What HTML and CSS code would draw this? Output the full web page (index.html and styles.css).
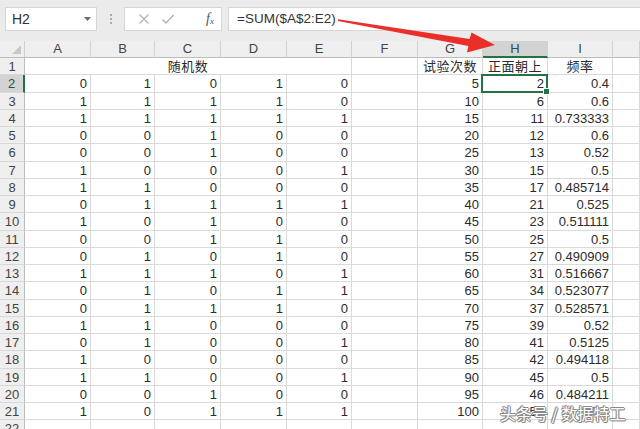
FILE: index.html
```html
<!DOCTYPE html>
<html lang="zh-CN">
<head>
<meta charset="utf-8">
<title>随机数</title>
<link rel="stylesheet" href="styles.css">
</head>
<body>
<div class="app">
  <div class="fbar">
    <div class="namebox"><span class="nb-text">H2</span><svg class="nb-arrow" width="7" height="4" viewBox="0 0 7 4"><path d="M0 0H7L3.5 4Z" fill="#6a6a6a"/></svg></div>
    <div class="grip"><i></i><i></i><i></i></div>
    <div class="fbtns">
      <svg class="ic" width="12" height="12" viewBox="0 0 12 12"><path d="M1.5 1.5L10.5 10.5M10.5 1.5L1.5 10.5" stroke="#b4b4b4" stroke-width="1.3" fill="none"/></svg>
      <svg class="ic" width="14" height="12" viewBox="0 0 14 12"><path d="M1.5 6.5L5 10L12.5 2" stroke="#b4b4b4" stroke-width="1.5" fill="none"/></svg>
      <span class="fx">f<sub>x</sub></span>
    </div>
    <div class="formula">=SUM($A$2:E2)</div>
  </div>

  <div class="sheet">
    <div class="corner"><svg width="9" height="9" viewBox="0 0 9 9"><path d="M9 0V9H0Z" fill="#c8c8c8"/></svg></div>
    <div class="ch">A</div><div class="ch">B</div><div class="ch">C</div><div class="ch">D</div><div class="ch">E</div><div class="ch">F</div><div class="ch">G</div><div class="ch ch-sel">H</div><div class="ch">I</div><div class="ch"></div>

    <div class="rh">1</div><div class="c merged">随机数</div><div class="c"></div><div class="c t">试验次数</div><div class="c t">正面朝上</div><div class="c t">频率</div><div class="c"></div>

    <div class="rh rh-sel">2</div><div class="c n">0</div><div class="c n">1</div><div class="c n">0</div><div class="c n">1</div><div class="c n">0</div><div class="c"></div><div class="c n">5</div><div class="c n active">2</div><div class="c n">0.4</div><div class="c"></div>
    <div class="rh">3</div><div class="c n">1</div><div class="c n">1</div><div class="c n">1</div><div class="c n">1</div><div class="c n">0</div><div class="c"></div><div class="c n">10</div><div class="c n">6</div><div class="c n">0.6</div><div class="c"></div>
    <div class="rh">4</div><div class="c n">1</div><div class="c n">1</div><div class="c n">1</div><div class="c n">1</div><div class="c n">1</div><div class="c"></div><div class="c n">15</div><div class="c n">11</div><div class="c n">0.733333</div><div class="c"></div>
    <div class="rh">5</div><div class="c n">0</div><div class="c n">0</div><div class="c n">1</div><div class="c n">0</div><div class="c n">0</div><div class="c"></div><div class="c n">20</div><div class="c n">12</div><div class="c n">0.6</div><div class="c"></div>
    <div class="rh">6</div><div class="c n">0</div><div class="c n">0</div><div class="c n">1</div><div class="c n">0</div><div class="c n">0</div><div class="c"></div><div class="c n">25</div><div class="c n">13</div><div class="c n">0.52</div><div class="c"></div>
    <div class="rh">7</div><div class="c n">1</div><div class="c n">0</div><div class="c n">0</div><div class="c n">0</div><div class="c n">1</div><div class="c"></div><div class="c n">30</div><div class="c n">15</div><div class="c n">0.5</div><div class="c"></div>
    <div class="rh">8</div><div class="c n">1</div><div class="c n">1</div><div class="c n">0</div><div class="c n">0</div><div class="c n">0</div><div class="c"></div><div class="c n">35</div><div class="c n">17</div><div class="c n">0.485714</div><div class="c"></div>
    <div class="rh">9</div><div class="c n">0</div><div class="c n">1</div><div class="c n">1</div><div class="c n">1</div><div class="c n">1</div><div class="c"></div><div class="c n">40</div><div class="c n">21</div><div class="c n">0.525</div><div class="c"></div>
    <div class="rh">10</div><div class="c n">1</div><div class="c n">0</div><div class="c n">1</div><div class="c n">0</div><div class="c n">0</div><div class="c"></div><div class="c n">45</div><div class="c n">23</div><div class="c n">0.511111</div><div class="c"></div>
    <div class="rh">11</div><div class="c n">0</div><div class="c n">0</div><div class="c n">1</div><div class="c n">1</div><div class="c n">0</div><div class="c"></div><div class="c n">50</div><div class="c n">25</div><div class="c n">0.5</div><div class="c"></div>
    <div class="rh">12</div><div class="c n">0</div><div class="c n">1</div><div class="c n">0</div><div class="c n">1</div><div class="c n">0</div><div class="c"></div><div class="c n">55</div><div class="c n">27</div><div class="c n">0.490909</div><div class="c"></div>
    <div class="rh">13</div><div class="c n">1</div><div class="c n">1</div><div class="c n">1</div><div class="c n">0</div><div class="c n">1</div><div class="c"></div><div class="c n">60</div><div class="c n">31</div><div class="c n">0.516667</div><div class="c"></div>
    <div class="rh">14</div><div class="c n">0</div><div class="c n">1</div><div class="c n">0</div><div class="c n">1</div><div class="c n">1</div><div class="c"></div><div class="c n">65</div><div class="c n">34</div><div class="c n">0.523077</div><div class="c"></div>
    <div class="rh">15</div><div class="c n">0</div><div class="c n">1</div><div class="c n">1</div><div class="c n">1</div><div class="c n">0</div><div class="c"></div><div class="c n">70</div><div class="c n">37</div><div class="c n">0.528571</div><div class="c"></div>
    <div class="rh">16</div><div class="c n">1</div><div class="c n">1</div><div class="c n">0</div><div class="c n">0</div><div class="c n">0</div><div class="c"></div><div class="c n">75</div><div class="c n">39</div><div class="c n">0.52</div><div class="c"></div>
    <div class="rh">17</div><div class="c n">0</div><div class="c n">1</div><div class="c n">0</div><div class="c n">0</div><div class="c n">1</div><div class="c"></div><div class="c n">80</div><div class="c n">41</div><div class="c n">0.5125</div><div class="c"></div>
    <div class="rh">18</div><div class="c n">1</div><div class="c n">0</div><div class="c n">0</div><div class="c n">0</div><div class="c n">0</div><div class="c"></div><div class="c n">85</div><div class="c n">42</div><div class="c n">0.494118</div><div class="c"></div>
    <div class="rh">19</div><div class="c n">1</div><div class="c n">1</div><div class="c n">0</div><div class="c n">0</div><div class="c n">1</div><div class="c"></div><div class="c n">90</div><div class="c n">45</div><div class="c n">0.5</div><div class="c"></div>
    <div class="rh">20</div><div class="c n">0</div><div class="c n">0</div><div class="c n">1</div><div class="c n">0</div><div class="c n">0</div><div class="c"></div><div class="c n">95</div><div class="c n">46</div><div class="c n">0.484211</div><div class="c"></div>
    <div class="rh">21</div><div class="c n">1</div><div class="c n">0</div><div class="c n">1</div><div class="c n">1</div><div class="c n">1</div><div class="c"></div><div class="c n">100</div><div class="c n">50</div><div class="c n">0.5</div><div class="c"></div>
    <div class="rh">22</div><div class="c"></div><div class="c"></div><div class="c"></div><div class="c"></div><div class="c"></div><div class="c"></div><div class="c"></div><div class="c"></div><div class="c"></div><div class="c"></div>
  </div>

  <svg class="arrow" width="640" height="429" viewBox="0 0 640 429">
    <path d="M338.1 19.2 L469.6 39 L471.5 32.5 L495 45 L467 52.5 L468.4 46 L337.9 20.9 Z" fill="#ea2f2b"/>
  </svg>

  <div class="watermark">头条号 / 数据特工</div>
</div>
</body>
</html>
```

FILE: styles.css
```css
html, body {
  margin: 0;
  padding: 0;
  background: #ffffff;
}

body {
  width: 640px;
  height: 429px;
  overflow: hidden;
  font-family: "Liberation Sans", "Noto Sans CJK SC", sans-serif;
  color: #2b2b2b;
}

.app {
  position: relative;
  width: 640px;
  height: 429px;
  overflow: hidden;
}

/* formula bar */
.fbar {
  height: 41px;
  box-sizing: border-box;
  background: #ebebeb;
  display: flex;
  align-items: flex-start;
  padding: 7px 0 0 5px;
}

.namebox {
  width: 92px;
  height: 24px;
  box-sizing: border-box;
  background: #fff;
  border: 1px solid #d6d6d6;
  display: flex;
  align-items: center;
  justify-content: space-between;
  padding: 0 5px 0 6px;
}

.nb-text {
  font-size: 14px;
  color: #333;
}

.grip {
  width: 27px;
  height: 24px;
  display: flex;
  flex-direction: column;
  align-items: center;
  justify-content: center;
  gap: 2px;
}

.grip i {
  display: block;
  width: 2px;
  height: 2px;
  background: #a8a8a8;
}

.fbtns {
  width: 98px;
  height: 24px;
  box-sizing: border-box;
  background: #fff;
  border: 1px solid #d6d6d6;
  display: flex;
  align-items: center;
  padding: 0 7px 0 13px;
}

.fbtns .ic:first-child {
  margin-right: 11px;
}

.fx {
  margin-left: auto;
  font-family: "Liberation Serif", serif;
  font-style: italic;
  font-size: 14px;
  color: #555;
  line-height: 1;
}

.fx sub {
  font-size: 9px;
  vertical-align: -1px;
}

.formula {
  margin-left: 6px;
  flex: 1;
  height: 24px;
  box-sizing: border-box;
  background: #fff;
  border: 1px solid #d6d6d6;
  border-right: 0;
  font-size: 13.5px;
  line-height: 22px;
  padding-left: 8px;
  color: #333;
}

/* sheet grid */
.sheet {
  display: grid;
  grid-template-columns: 25px 66px 64px 66px 66px 65px 66px 65px 65px 65px 1fr;
  grid-template-rows: 17px;
  grid-auto-rows: 17.25px;
  font-size: 13px;
}

.corner {
  background: #efefef;
  border-right: 1px solid #cfcfcf;
  border-bottom: 1px solid #bdbdbd;
  display: flex;
  align-items: flex-end;
  justify-content: flex-end;
  padding: 0 3px 3px 0;
}

.ch {
  background: #efefef;
  border-right: 1px solid #d2d2d2;
  border-bottom: 1px solid #bdbdbd;
  text-align: center;
  line-height: 16px;
  color: #444;
}

.ch-sel {
  background: #d3d3d3;
  border-bottom: 2px solid #217346;
  line-height: 15px;
  color: #2f4f3a;
}

.rh {
  background: #efefef;
  border-right: 1px solid #bdbdbd;
  border-bottom: 1px solid #d8d8d8;
  text-align: center;
  line-height: 17px;
  color: #444;
  font-size: 13px;
}

.rh-sel {
  background: #d3d3d3;
  border-right: 2px solid #217346;
  color: #2f4f3a;
}

.c {
  border-right: 1px solid #dadada;
  border-bottom: 1px solid #dadada;
  line-height: 17px;
  padding: 0 3px;
  white-space: nowrap;
  overflow: visible;
}

.n {
  text-align: right;
}

.t {
  font-family: "Noto Sans CJK SC", sans-serif;
  font-size: 13px;
  text-align: center;
  line-height: 16px;
  padding: 0;
  letter-spacing: 0.5px;
}

.merged {
  grid-column: span 5;
  text-align: center;
  font-family: "Noto Sans CJK SC", sans-serif;
  line-height: 16px;
  letter-spacing: 0.5px;
}

.active {
  position: relative;
}

.active::after {
  content: "";
  position: absolute;
  top: -1px;
  left: -2px;
  right: -1px;
  bottom: -1px;
  border: 2px solid #217346;
  pointer-events: none;
}

.active::before {
  content: "";
  position: absolute;
  right: -3px;
  bottom: -3px;
  width: 5px;
  height: 5px;
  background: #217346;
  border: 1px solid #fff;
  z-index: 2;
}

/* overlays */
.arrow {
  position: absolute;
  left: 0;
  top: 0;
  pointer-events: none;
}

.watermark {
  position: absolute;
  left: 500px;
  top: 401px;
  font-family: "Noto Sans CJK SC", sans-serif;
  font-size: 16px;
  color: #ffffff;
  white-space: nowrap;
  text-shadow:
    1px 0 0 #8a8a8a, -1px 0 0 #8a8a8a, 0 1px 0 #8a8a8a, 0 -1px 0 #8a8a8a,
    1px 1px 0 #9a9a9a, -1px -1px 0 #9a9a9a;
}
```
